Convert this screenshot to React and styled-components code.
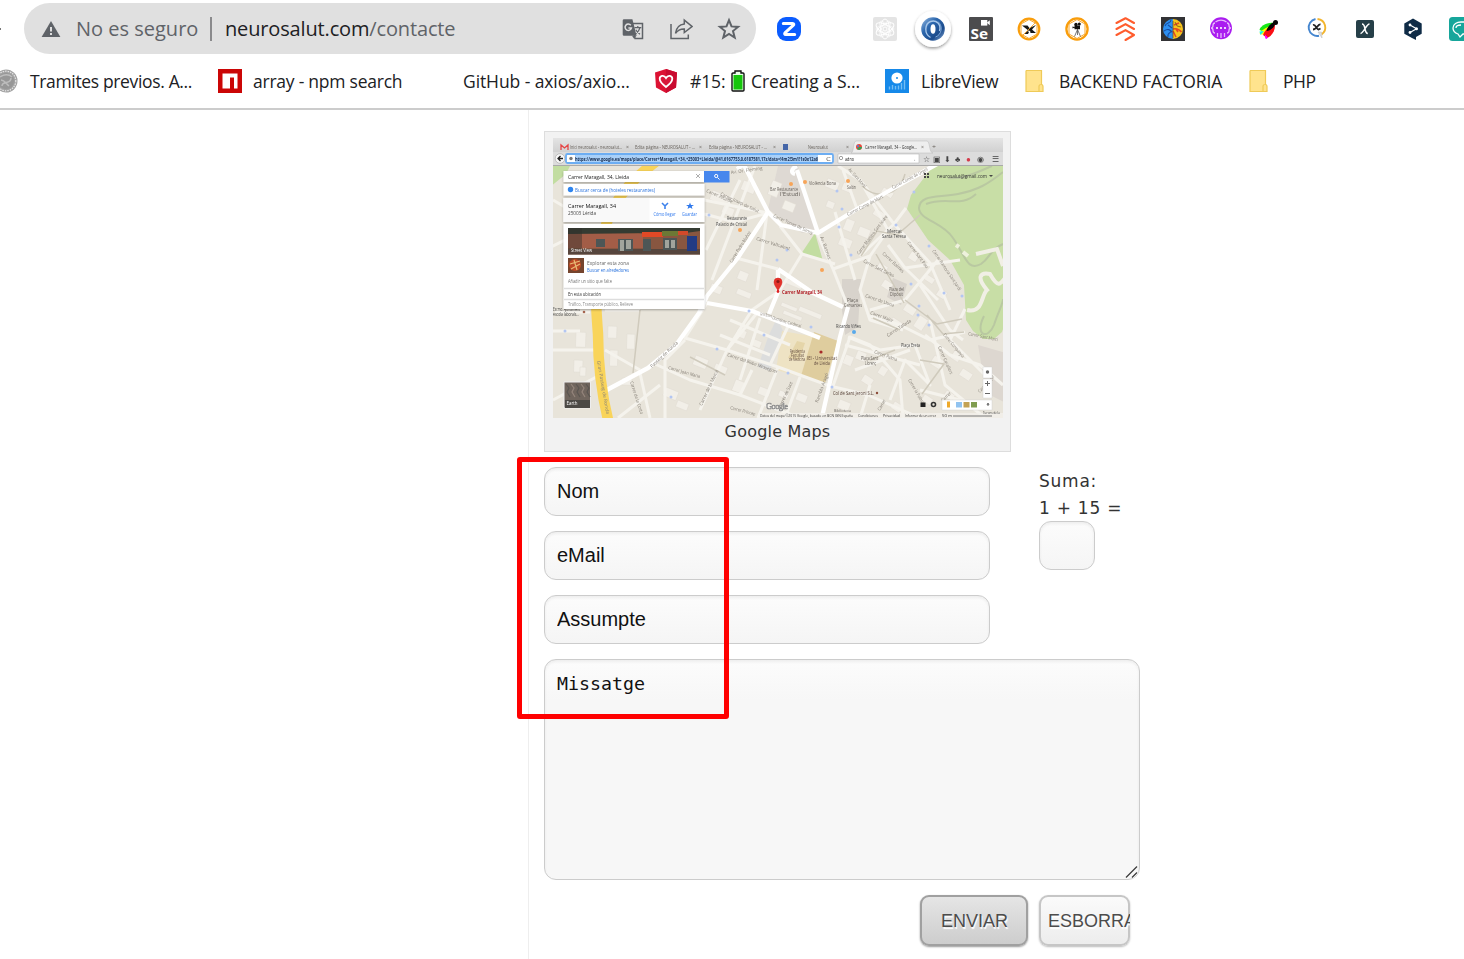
import React from "react";
import styled, { createGlobalStyle } from "styled-components";

const GlobalStyle = createGlobalStyle`
  * { box-sizing: border-box; }
  html, body { margin: 0; padding: 0; background: #fff; overflow: hidden; }
`;

const Window = styled.div`
  position: relative;
  width: 1464px;
  height: 959px;
  overflow: hidden;
  display: flex;
  flex-direction: column;
  background: #fff;
  font-family: "Open Sans", "Noto Sans", sans-serif;
`;

/* ---------- browser chrome ---------- */

const Toolbar = styled.header`
  height: 58px;
  flex: none;
  display: flex;
  align-items: center;
  padding-bottom: 1px;
`;

const ArrowTip = styled.span`
  flex: none;
  width: 1px;
  height: 2px;
  margin-right: 23px;
  background: #777;
`;

const AddressBar = styled.div`
  width: 732px;
  height: 51px;
  flex: none;
  display: flex;
  align-items: center;
  padding: 0 15px 0 17px;
  border-radius: 26px;
  background: #e0e0e0;
  font-size: 20px;
  color: #5f6368;
  white-space: nowrap;
`;

const Security = styled.span`
  width: 134px;
  margin-left: 15px;
`;

const Divider = styled.span`
  width: 2px;
  height: 24px;
  margin-right: 13px;
  background: #8a8a8c;
`;

const Url = styled.span`
  flex: 1;
  letter-spacing: -0.15px;
  b { font-weight: 400; color: #202124; }
`;

const AddressActions = styled.div`
  display: flex;
  gap: 24px;
`;

const Extensions = styled.div`
  display: flex;
  gap: 24px;
  margin-left: 21px;
  svg { flex: none; overflow: visible; }
`;

const EmptySlot = styled.span`
  width: 24px;
`;

const BookmarkBar = styled.nav`
  height: 52px;
  flex: none;
  display: flex;
  align-items: center;
  padding-bottom: 4px;
  border-bottom: 2px solid #ccc;
  font-size: 17.5px;
  color: #202124;
  white-space: nowrap;
`;

const Bookmark = styled.a`
  display: flex;
  align-items: center;
  flex: none;
  width: ${(p) => p.$width}px;
  letter-spacing: ${(p) => p.$track || 0}px;
  svg { flex: none; }
`;

const BookmarkIcon = styled.span`
  display: flex;
  flex: none;
  width: ${(p) => p.$width}px;
`;

/* ---------- page ---------- */

const Page = styled.main`
  flex: 1;
  margin-left: 528px;
  padding: 21px 0 0 15px;
  border-left: 1px solid #eee;
`;

const Figure = styled.figure`
  width: 467px;
  height: 321px;
  margin: 0 0 15px;
  padding: 6px 8px 0;
  border: 1px solid #ddd;
  background: #f2f2f2;
  svg { display: block; }
`;

const Caption = styled.figcaption`
  height: 27px;
  line-height: 27px;
  text-align: center;
  font-family: "DejaVu Sans", Verdana, sans-serif;
  font-size: 16px;
  letter-spacing: 0.2px;
  color: #333;
`;

const FormRow = styled.div`
  display: flex;
  align-items: flex-start;
`;

const Fields = styled.div`
  display: flex;
  flex-direction: column;
  gap: 15px;
`;

const Field = styled.input`
  display: block;
  width: ${(p) => p.$width || 446}px;
  height: 49px;
  padding: 0 12px;
  border: 1px solid #ccc;
  border-radius: 12px;
  outline: none;
  background: linear-gradient(#fcfcfc, #f5f5f5);
  box-shadow: inset 0 2px 3px rgba(0, 0, 0, 0.06);
  font: 20px "Liberation Sans", Arial, sans-serif;
  color: #111;
`;

const Captcha = styled.label`
  margin-left: 49px;
  font: 17px/29px "DejaVu Sans", Verdana, sans-serif;
  letter-spacing: 0.75px;
  color: #333;
  span { display: block; height: 27px; white-space: nowrap; }
`;

const MessageBox = styled.div`
  position: relative;
  width: 596px;
  height: 221px;
  margin: 15px 0;
`;

const Message = styled.textarea`
  display: block;
  width: 100%;
  height: 100%;
  padding: 12px;
  border: 1px solid #ccc;
  border-radius: 12px;
  outline: none;
  resize: none;
  background: linear-gradient(#fcfcfc, #f7f7f7 40px);
  box-shadow: inset 0 2px 3px rgba(0, 0, 0, 0.06);
  font: 18.27px/24px "DejaVu Sans Mono", Consolas, monospace;
  color: #111;
`;

const ResizeGrip = styled.svg`
  position: absolute;
  right: 1px;
  bottom: 1px;
`;

const Actions = styled.div`
  display: flex;
  gap: 11px;
  margin-left: 376px;
`;

const Button = styled.button`
  width: ${(p) => p.$width}px;
  height: 51px;
  padding: 2px 0 0 ${(p) => p.$inset}px;
  overflow: hidden;
  text-align: left;
  white-space: nowrap;
  border: 0;
  border-radius: 9px;
  background: ${(p) => (p.$primary ? "linear-gradient(#e6e6e6, #cccccc)" : "linear-gradient(#fbfbfb, #ececec)")};
  box-shadow: inset 0 0 0 2px ${(p) => (p.$primary ? "#a0a0a0" : "#c6c6c6")}, 0 1px 2px ${(p) => (p.$primary ? "#999" : "#bbb")};
  font: 18px "Liberation Sans", Arial, sans-serif;
  color: #4c4c4c;
  text-shadow: 1px 2px 1px #fff;
`;

const Highlight = styled.div`
  position: absolute;
  left: 517px;
  top: 457px;
  width: 212px;
  height: 262px;
  border: 5px solid #f00;
  border-radius: 3px;
  pointer-events: none;
`;

/* ---------- address bar icons ---------- */

const WarningIcon = () => (
  <svg width="20" height="18" viewBox="0 0 20 18">
    <path d="M10 1 19.4 17H.6z" fill="#5f6368" />
    <path d="M9 7h2v4.5H9zM9 13h2v2H9z" fill="#e0e0e0" />
  </svg>
);

const TranslateIcon = () => (
  <svg width="24" height="24" viewBox="0 0 24 24">
    <path d="M11 6.5h10.500v15H14L11 6.500" fill="none" stroke="#5f6368" strokeWidth="1.5" />
    <path d="M3 2.300h8.400l4.200 16.400H3a1.300 1.300 0 0 1-1.300-1.300V3.600A1.300 1.300 0 0 1 3 2.300z" fill="#5f6368" />
    <path d="M11 18.700h4.500l-2.700 2.800z" fill="#5f6368" />
    <path d="M9.800 8.200A3.200 3.200 0 1 0 10.400 11H7.400" fill="none" stroke="#e0e0e0" strokeWidth="1.5" />
    <path d="M13.500 10.700h6.800M16.800 9v1.700M19 10.700c-.6 2.700-2 4.500-4.500 6.300M14.800 12.700c1 1.800 2.500 3.300 4.200 4.500" fill="none" stroke="#5f6368" strokeWidth="1.2" />
  </svg>
);

const ShareIcon = () => (
  <svg width="24" height="24" viewBox="0 0 24 24" fill="none" stroke="#5f6368" strokeWidth="1.5">
    <path d="M2 7v14.500h17.300v-4" />
    <path d="M15.300 3.200 23 9.500l-7.700 6v-3.600c-4-.1-6.800 1.400-8.800 4.400.7-5.300 3.900-8.800 8.800-9.400z" />
  </svg>
);

const StarIcon = () => (
  <svg width="24" height="24" viewBox="0 0 24 24" fill="none" stroke="#5f6368" strokeWidth="2">
    <path d="m12 3.200 2.500 6.200 6.600.5-5.100 4.200 1.700 6.500-5.700-3.600-5.700 3.600L8 14.100 2.900 9.900l6.600-.5z" />
  </svg>
);

/* ---------- extension icons ---------- */

const Ico = ({ children }) => (
  <svg width="24" height="24" viewBox="0 0 24 24">{children}</svg>
);

const ZIcon = () => (
  <Ico>
    <rect width="24" height="24" rx="9" fill="#0b5cff" />
    <path d="M6.300 6.500H15.500c1.500 0 1.700 1 .7 1.900l-8 7.200c-1 1-.6 1.900.6 1.900h8.900" fill="none" stroke="#fff" strokeWidth="3" strokeLinecap="round" strokeLinejoin="round" />
  </Ico>
);

const ReactIcon = () => (
  <Ico>
    <rect width="24" height="24" rx="2" fill="#e4e4e4" />
    <g fill="none" stroke="#fff" strokeWidth="1">
      {[0, 60, 120].map((a) => (
        <ellipse key={a} cx="12" cy="12" rx="10" ry="4.400" transform={`rotate(${a + 30} 12 12)`} />
      ))}
      {[0, 60, 120].map((a) => (
        <ellipse key={a} cx="12" cy="12" rx="9" ry="3.400" strokeWidth=".6" transform={`rotate(${a} 12 12)`} />
      ))}
      <circle cx="12" cy="12" r="2" />
    </g>
  </Ico>
);

const SpiralIcon = () => (
  <Ico>
    <defs>
      <filter id="disc" x="-40%" y="-40%" width="180%" height="190%">
        <feDropShadow dx="0" dy="1.500" stdDeviation="1.600" floodOpacity=".4" />
      </filter>
      <linearGradient id="swirl" x1="0" y1="0" x2="1" y2="1">
        <stop offset="0" stopColor="#9dbfe4" />
        <stop offset=".35" stopColor="#2e69af" />
        <stop offset=".7" stopColor="#1b4b8c" />
        <stop offset="1" stopColor="#8db2dc" />
      </linearGradient>
    </defs>
    <circle cx="12" cy="12" r="18" fill="#fff" filter="url(#disc)" />
    <circle cx="12" cy="12" r="11.800" fill="url(#swirl)" />
    <path d="M9.500 20.500C3 17 3.500 7 9.500 4.500c6-2 11 3 9 9.500" fill="none" stroke="#a9c8ea" strokeWidth="1.400" />
    <path d="M14.500 20C20.500 18 22.500 9.500 17 4.500" fill="none" stroke="#7fa9d9" strokeWidth="1" />
    <ellipse cx="12" cy="12" rx="2.500" ry="4.800" fill="#fff" />
  </Ico>
);

const SeleniumIcon = () => (
  <Ico>
    <rect width="24" height="24" rx="1" fill="#4c4c4e" />
    <rect x="12" y="3" width="6.300" height="5.600" fill="#fff" />
    <path d="m17.800 5.800 3-2.500v5z" fill="#fff" />
    <text x="1.600" y="21.500" textLength="17.500" lengthAdjust="spacingAndGlyphs" fontFamily="Open Sans, sans-serif" fontWeight="700" fontSize="13.500" fill="#fff">Se</text>
  </Ico>
);

const CompassIcon = () => (
  <Ico>
    <circle cx="12" cy="12" r="10.300" fill="#fff" stroke="#f99d0b" strokeWidth="2.200" />
    <path d="M12 2.500 20 7v10l-8 4.500L4 17V7z" fill="none" stroke="#f9a72b" />
    <path d="M5 8.500h5.500L14 13l-2 1zM7.500 17l3-3 1.500 1-1 2zM12.500 11l6.500-3-4 4.500 4 3.500h-5.500z" fill="#171717" />
    <path d="m5 19 14-14" stroke="#f5a126" strokeWidth=".9" />
  </Ico>
);

const CameraIcon = () => (
  <Ico>
    <circle cx="12" cy="12" r="10.600" fill="#fff" stroke="#f99d0b" strokeWidth="2.300" />
    <path d="M12 2.500 20 7v10l-8 4.500L4 17V7z" fill="none" stroke="#f9a72b" />
    <path d="M9.500 8.500h5.500v3.700H9.500zM7.500 9.500l2.500.8-2.500 1.200z" fill="#111" />
    <circle cx="11" cy="7.500" r="1.700" fill="#111" /><circle cx="14.300" cy="7" r="1.500" fill="#111" />
    <path d="m12.500 12.500-3 7M12.500 12.500l3 7M12.500 12v6" stroke="#555" strokeWidth=".8" />
  </Ico>
);

const ChevronsIcon = () => (
  <Ico>
    <g fill="none" stroke="#ff5c2d" strokeWidth="2.100" strokeLinecap="round" strokeLinejoin="round">
      <path d="m3.500 6 9-4.800 8.500 4.800M3.500 12l9-4.900 8.500 4.900M3.500 18l9-4.900 8.500 4.900-8.500 5" />
    </g>
  </Ico>
);

const BrainIcon = () => (
  <Ico>
    <rect width="24" height="24" fill="#323235" />
    <path d="M12 2A10 10 0 0 0 12 22z" fill="#2d8ff0" />
    <path d="M12 2A10 10 0 0 1 12 22z" fill="#f7c41c" />
    <path d="M12 12c4-1 6 0 8.500 3M12 14l3 6M13 8l5-2M15 12l2 3" fill="none" stroke="#e24b24" strokeWidth="1.600" />
    <path d="M10 3c0 4-5 2-6 6M3 14c4-3 6-1 8 1M7 20c-1-4 2-4 4-6M7 8l4 3" fill="none" stroke="#164da5" strokeWidth="1.100" />
    <path d="M12 4v17M14 5l2 4 4 1" stroke="#684913" strokeWidth=".7" fill="none" />
  </Ico>
);

const BracesIcon = () => (
  <Ico>
    <circle cx="12" cy="11.200" r="11" fill="#aa1cf0" />
    <g fill="none" stroke="#e6b9fb" strokeWidth="1.300">
      <path d="M6 6c-2 0-2 1-2 2.500s-.5 2.500-2 2.500c1.500 0 2 1 2 2.500S4 16 6 16M18 6c2 0 2 1 2 2.500s.5 2.500 2 2.500c-1.500 0-2 1-2 2.500s0 2.500-2 2.500M6.500 5c3-2.500 8-2.500 11 0M8.500 16v4M12 16v5M15.500 16v4" />
    </g>
    <g fill="#fff"><circle cx="8" cy="11" r="1.100" /><circle cx="12" cy="11" r="1.100" /><circle cx="16" cy="11" r="1.100" /></g>
  </Ico>
);

const FireflyIcon = () => (
  <Ico>
    <path d="M17 6C9 5 3 10 2.500 13c3 2 7 1 9-1z" fill="#17e817" />
    <path d="M17 7C11 10 6 12 2.500 16c1 2 4 2 6 0z" fill="#ff0" />
    <path d="M16 7c-6 4-9 8-10 11l4 3c5-2 8-7 8-13z" fill="#fa0e14" />
    <path d="m8 17.500 3 3-1.500 1.500c-1.500 0-1.500-2-1.500-4.500z" fill="#f0f" />
    <path d="M2.500 14.500 7 14l-3.500 4z" fill="#10efef" />
    <path d="M17 5c-4 2-7 5-7.500 9 4.500-1 7.500-3 8.500-7z" fill="#060606" />
    <circle cx="18.500" cy="5.500" r="2.500" fill="#080808" />
  </Ico>
);

const OrbitIcon = () => (
  <Ico>
    <circle cx="12" cy="10.500" r="7.700" fill="#fff" />
    <path d="M10.500 2A8.500 8.500 0 1 0 14 18.800" fill="none" stroke="#4586cf" strokeWidth="1.900" />
    <path d="M12.500 2a8.500 8.500 0 0 1 4 15.500" fill="none" stroke="#f3b52d" strokeWidth="1.900" />
    <path d="m13 15 4 6-.5-6z" fill="#ddd" stroke="#bbb" strokeWidth=".5" />
    <path d="M8 8c3-1 3 4 5.500 4.500l2-1M15.500 7.500C13 7 11.500 12.500 8 12.500" fill="none" stroke="#222" strokeWidth="1.800" />
  </Ico>
);

const XIcon = () => (
  <Ico>
    <rect x="3" y="3" width="18" height="18" rx="2" fill="#263f48" />
    <path d="M9 7c1.500 0 2.200.800 2.800 4 .7 4 1.300 5.500 3 5.500M16.500 7c-1.500 0-2.500 1.500-4.500 4.700-2 3.300-3 4.800-4.500 4.800" fill="none" stroke="#fff" strokeWidth="1.500" />
  </Ico>
);

const DeeplIcon = () => (
  <Ico>
    <path d="M12 1.500 20.700 6.500v10.300L15 20v3l-4-2-7.700-4.200V6.500z" fill="#0f2b46" />
    <path d="m9 8 6.500 3.700L9 15.500" fill="none" stroke="#fff" strokeWidth="1.200" />
    <g fill="#fff"><circle cx="9" cy="8" r="1.400" /><circle cx="15.500" cy="11.700" r="1.500" /><circle cx="9" cy="15.500" r="1.400" /></g>
  </Ico>
);

const ChatIcon = () => (
  <Ico>
    <rect width="24" height="24" rx="3.500" fill="#16a69b" />
    <path d="M4 11c0-4 4-6 8-6h8v12h-6l-3 3-2-3c-3-1-5-3-5-6zM7 11c0-2 2-3 5-3" fill="none" stroke="#fff" strokeWidth="1.300" />
  </Ico>
);

/* ---------- bookmark icons ---------- */

const SealIcon = () => (
  <svg width="18" height="24" viewBox="6 0 18 24">
    <circle cx="12" cy="12" r="11.500" fill="#a1a1a1" />
    <circle cx="12" cy="12" r="9.800" fill="none" stroke="#e3e3e3" strokeWidth="1.300" strokeDasharray="1.500 1" />
    <circle cx="12" cy="12" r="8" fill="#979797" />
    <path d="M6 8c4-3 9-3 12 0M8 17c0-6 9-1 9-8M7 11c4 0 5 4 8 6" stroke="#bdbdbd" fill="none" strokeWidth="1.500" />
  </svg>
);

const NpmIcon = () => (
  <svg width="24" height="24"><path d="M0 0h24v24H0z" fill="#cb0606" /><path d="M4.500 4.500h15v15H16v-11h-4v11H4.500z" fill="#fff" /></svg>
);

const HeartShield = () => (
  <svg width="24" height="24">
    <path d="M12 0 23 3.500 22 18.500 12 24 2 18.500 1 3.500z" fill="#dc1233" />
    <path d="M12 0 23 3.500 22 18.500 12 24z" fill="#c90b30" />
    <path d="M12 18c-4-3-6.300-5.500-6.300-8.200C5.700 6.500 10 5.500 12 9c2-3.500 6.300-2.500 6.300.8C18.300 12.500 16 15 12 18z" fill="#d8183a" stroke="#fff" strokeWidth="1.800" />
  </svg>
);

const Battery = () => (
  <svg width="14" height="22"><path d="M4 1h6v2h2a1 1 0 0 1 1 1v16a1 1 0 0 1-1 1H2a1 1 0 0 1-1-1V4a1 1 0 0 1 1-1h2z" fill="#e8ffe8" stroke="#111" strokeWidth="1.400" /><path d="M2.500 5h9v14.500h-9z" fill="#16c60c" /></svg>
);

const LibreIcon = () => (
  <svg width="24" height="24">
    <path d="M0 0h24v24H0z" fill="#1689e9" />
    <circle cx="12" cy="9" r="5.600" fill="#fff" /><circle cx="12" cy="9" r="1" fill="#1689e9" />
    <path d="M4.500 17.500v3M7.500 16v4.500M10.500 17v3.500M13.500 16.500v4M16.500 14v6.500M19.500 11v9.500" stroke="#73bdf4" strokeWidth="1.400" />
  </svg>
);

const FolderIcon = () => (
  <svg width="19" height="22">
    <path d="M1 .5h15.500v14H18v7H1z" fill="#ffe38d" />
    <path d="M1 .5h15.500v14M1 .5v21h17v-5a2 2 0 0 0-4 0v5" fill="none" stroke="#efca58" strokeWidth="1.200" />
  </svg>
);

/* ---------- map thumbnail ---------- */

const Txt = ({ x, y, w, s = 4.6, r = 0, c = "#66615b", b, children }) => (
  <text x={x} y={y} textLength={w} lengthAdjust="spacingAndGlyphs" fontSize={s} fill={c} fontWeight={b ? 700 : 500} transform={r ? `rotate(${r} ${x} ${y})` : undefined}>
    {children}
  </text>
);

const minorRoads = [
  "M704 200 768 213M704 214 735 222 768 213M706 250 740 180M712 280 755 166M736 258 778 269M767 213 757 290M780 226 802 254 780 290",
  "M817 233 833 269 870 256 888 230 860 180 838 166M833 269 848 307M860 180 894 224 930 263 950 310M857 209 843 170M870 256 860 290 870 320 903 330",
  "M894 224 860 256M894 224 906 208M835 212 855 280M802 254 835 264M888 245 905 268 938 300M905 268 960 260M938 260 905 300 870 310M920 285 950 330 963 340",
  "M707 303 685 338 727 350 757 313M700 410 727 350 752 310 778 292M685 340 665 360 665 418M640 373 650 418M655 364 690 380 740 395 800 418",
  "M727 350 778 367 830 386 868 395 920 418M778 367 758 418M740 395 752 370M800 377 785 418M833 386 850 337 870 345 900 380 903 418",
  "M848 337 880 350 915 345 930 385 905 360 890 400M870 316 900 325 930 340 965 332M930 320 945 385 985 418M925 335 950 355 980 365 1003 385M965 309 950 340 985 375",
  "M555 312 590 312M553 331 580 331M553 350 594 350M605 310 640 310M553 400 600 375M605 350 640 370M618 418 660 385M553 200 570 210M545 250 565 240",
  "M730 320 790 345M720 335 770 355M760 318 740 380M790 322 770 365M845 345 920 365M855 370 910 350M870 385 860 418M920 390 960 400",
];

const blocks = [
  [576, 332, 10, 15], [574, 360, 9, 12], [608, 326, 9, 12], [610, 350, 8, 16], [627, 334, 8, 15], [622, 378, 10, 7], [580, 367, 6, 9],
  [713, 190, 18, 10], [724, 205, 12, 8], [744, 180, 14, 10], [773, 180, 10, 15], [785, 200, 12, 9], [828, 178, 13, 9], [844, 182, 10, 8],
  [828, 200, 8, 7], [847, 218, 9, 12], [841, 236, 13, 9], [860, 226, 12, 9], [876, 208, 12, 7], [884, 187, 12, 6], [740, 270, 10, 9],
  [712, 283, 12, 8], [738, 288, 15, 6], [786, 278, 18, 5], [782, 302, 17, 4], [800, 306, 24, 5], [784, 310, 20, 4], [738, 328, 10, 8],
  [752, 338, 11, 7], [716, 363, 13, 8], [696, 355, 14, 10], [666, 387, 14, 9], [678, 400, 12, 7], [736, 379, 10, 12], [760, 386, 12, 8],
  [780, 390, 10, 6], [798, 392, 11, 8], [846, 354, 9, 10], [858, 350, 10, 9], [865, 374, 11, 8], [882, 365, 8, 9], [893, 317, 14, 8],
  [907, 303, 12, 8], [920, 315, 10, 13], [885, 279, 10, 8], [880, 262, 10, 7], [912, 251, 9, 8], [927, 274, 10, 6], [940, 288, 9, 8],
  [935, 355, 11, 10], [955, 350, 9, 9], [963, 368, 12, 8], [925, 394, 10, 7], [947, 390, 10, 7], [840, 399, 12, 9], [895, 401, 10, 8],
];

const dots = [[709, 215], [777, 260], [787, 250], [839, 227], [842, 209], [851, 255], [837, 191], [896, 225], [929, 246], [911, 284], [919, 306], [749, 311], [717, 349], [764, 335], [671, 397], [565, 331], [788, 373], [832, 387], [811, 327], [918, 315], [929, 325], [914, 192], [962, 296], [944, 293]];

const streetNames = [
  [706, 192, "Carrer Alcalde", 28, 23], [720, 195, "Carrer Josep de Salut", 42, 25], [731, 174, "Av. Dr. Fleming", 32, -8],
  [732, 263, "Carrer Pedro Muñoz", 36, -58], [756, 240, "Carrer Vallcalent", 35, 17], [773, 217, "Carrer Torres de Sanuy", 43, 24],
  [820, 237, "Av. Balmes", 24, 70], [848, 216, "Carrer Camp de Mart", 40, -27], [893, 189, "Carrer Comte de Urgell", 40, -28],
  [848, 170, "Av. Sant Martí", 24, 48], [859, 255, "Carrer Maestro Sant Isidre", 48, -53], [907, 243, "Carrer Sant Pau", 32, 53],
  [882, 254, "Carrer Balmes", 28, 43], [863, 262, "Carrer Sant Carles", 34, 27], [932, 251, "Carrer Ramona Sant Jordi", 48, 56],
  [865, 297, "Carrer de Lluna", 30, 19], [870, 314, "Carrer Major", 24, 20], [888, 337, "Carrer Tallada", 28, -33],
  [943, 335, "Carrer Companyia", 30, 50], [938, 347, "Carrer Cavallers", 30, 66], [908, 380, "Carrer la Palma", 28, 60],
  [874, 353, "Carrer Palma", 24, 20], [727, 356, "Carrer del Bisbe Messeguer", 53, 19], [668, 369, "Carrer Joan Maria", 33, 16],
  [630, 382, "Carrer de la Costa", 34, 72], [702, 406, "Carrer de la Mercè", 39, -65], [652, 368, "Passeig de Ronda", 36, -43],
  [597, 361, "Gran Passeig de Ronda", 54, 80], [772, 319, "Domènec Cardenal", 30, 17], [818, 403, "Rambla Aragó", 31, -70],
  [781, 408, "Carrer de Sant", 28, -65], [730, 409, "Carrer Príncep", 26, 15], [968, 335, "Carrer Sant Martí", 30, 12],
  [980, 393, "Carrer Major", 22, -48], [880, 411, "Carrer", 12, -60], [760, 315, "Carrer Bonaire", 12, 12], [943, 402, "Carrer", 12, -45],
];

const mapChromeIcons = [["☆", 923], ["▣", 933], ["⬇", 944], ["♣", 955], ["●", 966], ["◉", 977], ["☰", 992]];

const MapThumbnail = () => (
  <svg width="450" height="280" viewBox="553 138 450 280" fontFamily="Open Sans, sans-serif">
    <defs>
      <filter id="soft" x="0" y="0" width="100%" height="100%"><feGaussianBlur stdDeviation=".75" /></filter>
      <filter id="card" x="-5%" y="-5%" width="110%" height="115%"><feDropShadow dx="0" dy=".8" stdDeviation=".8" floodOpacity=".35" /></filter>
      <linearGradient id="tabs" x1="0" y1="0" x2="0" y2="1"><stop offset="0" stopColor="#efefef" /><stop offset="1" stopColor="#cfcfcf" /></linearGradient>
    </defs>
    <g filter="url(#soft)">
      <path d="M545 130h466v296H545z" fill="#e8e4da" />
      <path d="M778 166h20l18 63-14 4-34-24z" fill="#ded9d3" />
      <path d="M842 279h19l-3 48-13 8-3-25z" fill="#d8d3cc" />
      <path d="M893 278l14 6-6 21-14-8z" fill="#d8d3cc" />
      <path d="M978 345l28 8v50l-20-10z" fill="#ddd7d0" />
      <path d="m777 318 7 15-14 38-12-4 10-30z" fill="#dcdddd" />
      <path d="m782 331 57 10-14 42-49-13z" fill="#eee3c4" />
      <path d="m814 332 24 9-13 42-24-7z" fill="#dfcd9e" />
      <path d="m797 341 8 2-6 17-11-2z" fill="#e5d5a9" />
      <path d="M933 166h73v154l-4 12-8 7h-11l-10-8-7-11-2-35-14-25-22-20-21-31 4-14z" fill="#c8dea6" />
      <path d="m815 233 8 28-22-7zM550 166h20l-4 8-16 13z" fill="#c2dda1" />
      <g fill="#f2efe8" stroke="#e0dbd2" strokeWidth=".5">
        {blocks.map(([x, y, w, h], i) => <rect key={i} x={x} y={y} width={w} height={h} transform={`rotate(${x < 640 ? 2 : x > 860 ? 33 : 22} ${x} ${y})`} />)}
      </g>
      <g fill="none" stroke="#f5f3ed" strokeWidth="3" strokeLinejoin="round">
        {minorRoads.map((d) => <path key={d} d={d} />)}
      </g>
      <path d="M640 310 633 373M862 186c15 14 37 10 43-12M861 256l16-25 20 4 23-20M876 254l28 49M905 300l32 24 25-5M927 315l16 19 21-2M900 330l-27-12M920 360l24 4-22 30M870 360l25-10M690 357l35 18" fill="none" stroke="#cfcabc" strokeWidth="1.500" />
      <path d="M1003 172c-15 12-25 18-45 22-20 4-38 0-39 14 0 12 24 14 34 30 12 17 14 34 28 26 10-7 8-14 22-20M948 178c14 2 30-6 44-12M926 204c20-8 35 4 50-10M984 316c-10 20 4 24 10 9 4-13 9-21 9-26" fill="none" stroke="#b9c8a1" strokeWidth="2" />
      <path d="M976 254l21-5 6 17M967 310c16 4 14-15 20-20-10-12-8-18 3-16 8 14 10 11 16 3" fill="none" stroke="#f1efe5" strokeWidth="4" />
      <path d="M956 245l3 2M963 252l5 4" stroke="#eef1dc" strokeWidth="4" />
      <path d="m744 164-7 5M797 166c-5 2-7 7-2 8M797 170l21 63 39-24 46-26 34-19M743 163l25 49 13 13 37 8M768 212l-31 47-30 37-8 17-23 32-28 23-45 24M707 303l45 8 18 7 50 20M778 269l35 24 30 14M848 307l-8 30-18 80M778 270v22l-9 22" fill="none" stroke="#fff" strokeWidth="4.300" strokeLinejoin="round" />
      <path d="M658 160c-30 22-50 45-57 84-7 31-6 50-3 90 0 40 5 66 11 90" fill="none" stroke="#f9d45a" strokeWidth="10.500" />
      {dots.map(([x, y]) => <circle key={`${x}-${y}`} cx={x} cy={y} r="1.500" fill="#b3c6f2" />)}
      {[[740, 230], [791, 184], [805, 182], [848, 181], [822, 270]].map(([x, y]) => <circle key={x} cx={x} cy={y} r="2" fill="#f7a458" />)}
      {streetNames.map(([x, y, t, w, r]) => <Txt key={`${x}${y}`} x={x} y={y} w={w} r={r} c="#857f76">{t}</Txt>)}
      <Txt x={809} y={185} w={27}>Violència Bona</Txt><Txt x={847} y={189} w={9}>Salón</Txt>
      <Txt x={727} y={220} w={20} c="#444">Restaurante</Txt>
      <Txt x={716} y={226} w={31} c="#444">Palacio de Cristal</Txt>
      <Txt x={770} y={191} w={28}>Bar Restaurante</Txt>
      <Txt x={780} y={196} w={20}>l'Estudi</Txt>
      <Txt x={887} y={233} w={15} c="#444">Mercat</Txt><Txt x={882} y={238} w={24} c="#444">Santa Teresa</Txt>
      <Txt x={889} y={291} w={15}>Plaza del</Txt><Txt x={890} y={296} w={13}>Dipòsit</Txt>
      <Txt x={847} y={302} w={11}>Plaça</Txt><Txt x={844} y={307} w={18}>Cervantes</Txt>
      <Txt x={836} y={328} w={25} c="#444">Ricardo Viñes</Txt><Txt x={901} y={347} w={19} c="#444">Plaça Ereta</Txt>
      <Txt x={790} y={353} w={15} c="#624c40">Residencia</Txt><Txt x={791} y={357} w={13} c="#624c40">Facultat</Txt><Txt x={789} y={361} w={16} c="#624c40">de Medicina</Txt>
      <Txt x={807} y={360} w={30} c="#624c40">IEI - Universitat</Txt><Txt x={814} y={365} w={16} c="#624c40">de Lleida</Txt>
      <Txt x={861} y={360} w={17}>Plaça Sant</Txt><Txt x={865} y={365} w={11}>Llorenç</Txt>
      <Txt x={833} y={395} w={41} c="#503a30">Col de Sant Jeroni S.L.</Txt><circle cx="877" cy="393" r="1.200" fill="#8c4b3a" />
      <Txt x={553} y={311} w={27} c="#444">Excmo. Ajuntament</Txt><Txt x={553} y={316} w={26} c="#444">escola laborals...</Txt>
      <circle cx="584" cy="312" r="1.300" fill="#a6654f" /><circle cx="821" cy="352" r="1.600" fill="#a72b2b" />
      <circle cx="854" cy="332" r="2" fill="#58a9ea" />

      <path d="M778 292c-1-5-4-6-4-10a4 4 0 0 1 8 0c0 4-3 5-4 10z" fill="#e3302a" stroke="#d92721" strokeWidth=".5" /><circle cx="778" cy="281.500" r="1.600" fill="#8c1915" /><circle cx="778" cy="291.500" r="1.400" fill="#d22" />
      <Txt x={782} y={294} w={40} s={5.4} c="#b01d24" b>Carrer Maragall, 34</Txt>

      <path d="M545 130h466v23H545z" fill="url(#tabs)" /><path d="M545 152h466v14H545z" fill="#dcdcdc" /><path d="M545 165.500h466" stroke="#aaa" />
      <path d="M851 153c3 0 2-12 5-12h71c3 0 2 12 6 12z" fill="#eee" stroke="#bbb" strokeWidth=".5" />
      <path d="M561 150v-5l3.500 3 3.500-3v5" fill="none" stroke="#e64444" strokeWidth="1.300" />
      <Txt x={570} y={149} w={52}>Inici neurosalut - neurosalut...</Txt><Txt x={626} y={149} w={3}>×</Txt>
      <Txt x={635} y={149} w={60}>Edita pàgina - NEUROSALUT - ...</Txt><Txt x={699} y={149} w={3}>×</Txt>
      <Txt x={709} y={149} w={58}>Edita pàgina - NEUROSALUT - ...</Txt><Txt x={773} y={149} w={3}>×</Txt>
      <path d="M783 144h5v6h-5z" fill="#4566a8" /><Txt x={808} y={149} w={20}>Neurosalut</Txt><Txt x={846} y={149} w={3}>×</Txt>
      <circle cx="859" cy="147" r="3" fill="#e74a3b" /><path d="M859 147h3a3 3 0 0 1-5 2z" fill="#27a65b" /><circle cx="858" cy="146" r="1" fill="#4285f4" />
      <Txt x={865} y={149} w={52} c="#333">Carrer Maragall, 34 - Google...</Txt><Txt x={921} y={149} w={3}>×</Txt><Txt x={932} y={149} w={4}>+</Txt>
      <circle cx="560" cy="158.500" r="4.800" fill="#f8f8f8" stroke="#aaa" strokeWidth=".7" /><path d="m560.500 156-2.500 2.500 2.500 2.500M558.500 158.500h4.500" stroke="#222" fill="none" strokeWidth="1.300" />
      <rect x="566" y="154" width="267" height="9" rx="1.500" fill="#fff" stroke="#6cadf2" strokeWidth="1.800" /><path d="M575 155h243v7H575z" fill="#a9d0f8" />
      <circle cx="571" cy="158.500" r="1.700" fill="#777" />
      <Txt x={575} y={160.5} w={243} s={5.4} c="#15294b" b>https://www.google.es/maps/place/Carrer+Maragall,+34,+25003+Lleida/@41.6167753,0.6187581,17z/data=!4m2!3m1!1s0x12a6</Txt>
      <Txt x={826} y={161} w={5}>C</Txt>
      <path d="M838 154h81v9h-81z" fill="#fff" stroke="#bbb" strokeWidth=".6" /><circle cx="841" cy="158" r="1.700" fill="none" stroke="#777" strokeWidth=".7" /><Txt x={845} y={160.5} w={9} c="#222">adno</Txt><Txt x={912} y={161} w={4} c="#111">→</Txt>
      {mapChromeIcons.map(([t, x]) => <text key={t} x={x} y="161.500" fontSize="8" fill={t === "●" ? "#d43a4b" : "#444"}>{t}</text>)}
      <path d="M924 173h2v2h-2zM927 173h2v2h-2zM924 176h2v2h-2zM927 176h2v2h-2z" fill="#444" />
      <Txt x={937} y={178} w={50} s={5.4} c="#333">neurosalut@gmail.com</Txt><path d="m989 175 4 0-2 2z" fill="#444" />

      <g filter="url(#card)" fill="#fff"><path d="M563.500 171h141v11h-141zM563.500 184h141v11.500h-141zM563.500 198h141v24h-141zM563.500 224h141v85h-141z" /></g>
      <path d="M563.500 198h86v24h-86z" fill="#f9f9f9" />
      <path d="M704 171h25.500v11.500H704z" fill="#4787ed" /><circle cx="716.200" cy="176" r="1.600" fill="none" stroke="#fff" /><path d="m717.500 177.500 2 2" stroke="#fff" />
      <Txt x={568} y={179} w={61} s={5.8} c="#222">Carrer Maragall, 34, Lleida</Txt><path d="m696 174 4 4m0-4-4 4" stroke="#999" strokeWidth=".8" />
      <circle cx="570.500" cy="189.500" r="2.700" fill="#2f85ee" /><Txt x={575} y={191.8} w={80} s={5.4} c="#2670dd">Buscar cerca de (hoteles restaurantes)</Txt>
      <Txt x={568} y={207.5} w={48} s={5.8} c="#111">Carrer Maragall, 34</Txt><Txt x={568} y={214.5} w={28} s={5.2} c="#444">25003 Lérida</Txt>
      <path d="M665 209v-3l-3-3m3 3 3-3" fill="none" stroke="#3e82ec" strokeWidth="1.600" /><path d="m690 202.500 1 2.500h3l-2.300 1.500.8 2.500-2.500-1.500-2.500 1.500.8-2.500-2.300-1.500h3z" fill="#2f78ec" />
      <Txt x={653.5} y={216} w={22} c="#2f78ec">Cómo llegar</Txt><Txt x={682} y={216} w={15} c="#2f78ec">Guardar</Txt>
      <path d="M568 228h132v26.500H568z" fill="#88563f" /><path d="M568 228h132v3l-22 3-40-1-70 1z" fill="#343a32" /><path d="M568 234h75v14h-75z" fill="#a35d47" /><path d="M568 249h132v5.500H568z" fill="#56453d" />
      <path d="M618 239h15v12h-15zM643 239h8v12h-8zM663 238h14v12h-14zM596 239h9v8h-9z" fill="#4d5756" /><path d="M620 240h4v11h-4zM626 240h5v9h-5zM665 240h4v8h-4zM671 240h4v8h-4z" fill="#a1a49c" />
      <path d="M642 232h21v5h-21z" fill="#e14a25" /><path d="M662 231h16v5h-16z" fill="#6c7836" /><path d="M678 231h10v4h-10z" fill="#d24a2c" /><path d="M687 236h10v15h-10z" fill="#243b84" />
      <path d="M568 228h14v21h-14z" fill="#302e2a" opacity=".45" /><Txt x={571} y={251.5} w={21} s={5} c="#fff">Street View</Txt>
      <path d="M568 258h16v15h-16z" fill="#74442d" /><circle cx="575" cy="265" r="6" fill="#bd4a25" /><path d="M570 264l10-3M571 269l9-5M574 260l3 10" stroke="#e9bb76" strokeWidth="1.200" />
      <Txt x={587} y={265} w={42} s={5.6} c="#666">Explorar esta zona</Txt><Txt x={587} y={271.5} w={42} c="#2670dd">Buscar en alrededores</Txt><Txt x={568} y={283} w={44} s={5} c="#777">Añadir un sitio que falte</Txt>
      <path d="M564 288.500h140M564 299.500h140" stroke="#ddd" strokeWidth="1.500" /><Txt x={568} y={296} w={33} c="#333">En esta ubicación</Txt><Txt x={568} y={306} w={65} c="#888">Tráfico, Transporte público, Relieve</Txt>

      <path d="M564 382h26.500v26H564z" fill="#70655d" stroke="#eee" /><path d="M565 400h25v8h-25z" fill="#4b4844" />
      {[0, 1, 2, 3, 4].map((i) => <path key={i} d={`M${566 + i * 5} 384l3 4-2 4 3 5`} stroke={i % 2 ? "#94857b" : "#5a5751"} fill="none" strokeWidth="1.200" />)}
      <Txt x={566.5} y={405} w={11} c="#fff">Earth</Txt>
      <path d="M983 367h9v11h-9zM983 379h9v19h-9zM942 400h50v10h-50z" fill="#fff" stroke="#ccc" strokeWidth=".4" />
      <circle cx="987.500" cy="372" r="1.700" fill="#666" /><path d="M985 383.500h5m-2.500-2.500v5M985 393.500h5M987 405l1-2 1 2z" stroke="#666" fill="none" />
      <path d="M947 401.500h3v6h-3z" fill="#eea92b" /><path d="M956 402h6v5.500h-6z" fill="#91c3f0" /><path d="M963.500 402h6v5.500h-6z" fill="#c3a255" /><path d="M971 402h6v5.500h-6z" fill="#7f9c50" />
      <path d="M920.500 402.500h5v4.500h-5z" fill="#222" /><circle cx="933.500" cy="404.500" r="2" fill="none" stroke="#333" strokeWidth="1.600" />
      <text x="766" y="409" fontSize="8.500" textLength="22" fontFamily="Liberation Serif" fill="#fff" stroke="#8a8a8a" strokeWidth=".6">Google</text>
      <path d="M758 413h245v8H758z" fill="#f2f0eb" opacity=".8" />
      <Txt x={760} y={417} w={93} s={4} c="#333">Datos del mapa ©2015 Google, basado en BCN IGN España</Txt>
      <Txt x={858} y={417} w={20} s={4} c="#333">Condiciones</Txt><Txt x={883} y={417} w={17} s={4} c="#333">Privacidad</Txt><Txt x={905} y={417} w={31} s={4} c="#333">Informar de un error</Txt><Txt x={942} y={417} w={10} s={4} c="#333">50 m</Txt><path d="M953 416h39" stroke="#777" />
      <Txt x={983} y={413.5} w={17} s={4} c="#444">Turons de la</Txt><Txt x={834} y={412} w={17} s={4}>Biblioteca</Txt>
    </g>
  </svg>
);

/* ---------- app ---------- */

export default function App() {
  return (
    <Window>
      <GlobalStyle />
      <Toolbar>
        <ArrowTip />
        <AddressBar>
          <WarningIcon />
          <Security>No es seguro</Security>
          <Divider />
          <Url><b>neurosalut.com</b>/contacte</Url>
          <AddressActions><TranslateIcon /><ShareIcon /><StarIcon /></AddressActions>
        </AddressBar>
        <Extensions>
          <ZIcon /><EmptySlot /><ReactIcon /><SpiralIcon /><SeleniumIcon /><CompassIcon /><CameraIcon /><ChevronsIcon />
          <BrainIcon /><BracesIcon /><FireflyIcon /><OrbitIcon /><XIcon /><DeeplIcon /><ChatIcon />
        </Extensions>
      </Toolbar>
      <BookmarkBar>
        <Bookmark $width={218} $track={-0.35}><BookmarkIcon $width={30}><SealIcon /></BookmarkIcon>Tramites previos. A...</Bookmark>
        <Bookmark $width={245} $track={-0.24}><BookmarkIcon $width={35}><NpmIcon /></BookmarkIcon>array - npm search</Bookmark>
        <Bookmark $width={191} $track={-0.09}>GitHub - axios/axio...</Bookmark>
        <Bookmark $width={231} $track={-0.12}>
          <BookmarkIcon $width={36}><HeartShield /></BookmarkIcon>
          <BookmarkIcon $width={41}>#15:</BookmarkIcon>
          <BookmarkIcon $width={20}><Battery /></BookmarkIcon>
          Creating a S...
        </Bookmark>
        <Bookmark $width={140} $track={-0.25}><BookmarkIcon $width={36}><LibreIcon /></BookmarkIcon>LibreView</Bookmark>
        <Bookmark $width={224} $track={-0.14}><BookmarkIcon $width={34}><FolderIcon /></BookmarkIcon>BACKEND FACTORIA</Bookmark>
        <Bookmark $width={90} $track={-0.5}><BookmarkIcon $width={34}><FolderIcon /></BookmarkIcon>PHP</Bookmark>
      </BookmarkBar>
      <Page>
        <Figure>
          <MapThumbnail />
          <Caption>Google Maps</Caption>
        </Figure>
        <FormRow>
          <Fields>
            <Field defaultValue="Nom" />
            <Field defaultValue="eMail" />
            <Field defaultValue="Assumpte" />
          </Fields>
          <Captcha>
            <span>Suma:</span>
            <span>1 + 15 =</span>
            <Field $width={56} />
          </Captcha>
        </FormRow>
        <MessageBox>
          <Message defaultValue="Missatge" spellCheck={false} />
          <ResizeGrip width="14" height="14"><path d="M1 12.500 12 1.500M7 12.500l5-5" stroke="#fff" strokeWidth="3" /><path d="M1 12.500 12 1.500M7 12.500l5-5" stroke="#444" strokeWidth="1.500" /></ResizeGrip>
        </MessageBox>
        <Actions>
          <Button $primary $width={108} $inset={21}>ENVIAR</Button>
          <Button $width={91} $inset={9}>ESBORRAR</Button>
        </Actions>
      </Page>
      <Highlight />
    </Window>
  );
}
